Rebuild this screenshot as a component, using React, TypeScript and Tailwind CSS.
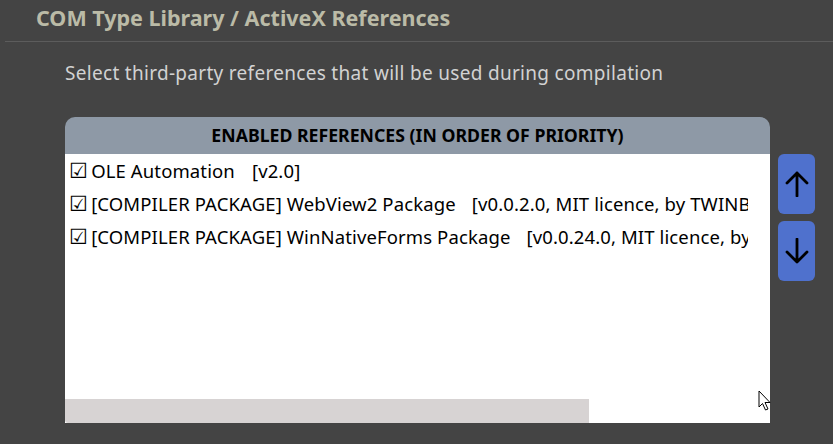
const refs = [
  { name: "OLE Automation", info: "[v2.0]", gap: "ml-[17px]" },
  {
    name: "[COMPILER PACKAGE] WebView2 Package",
    info: "[v0.0.2.0, MIT licence, by TWINBASIC LTD]",
    gap: "ml-[16px]",
  },
  {
    name: "[COMPILER PACKAGE] WinNativeForms Package",
    info: "[v0.0.24.0, MIT licence, by TWINBASIC LTD]",
    gap: "ml-[16px]",
  },
];

function Arrow({ down }: { down?: boolean }) {
  return (
    <svg
      width="24"
      height="26"
      viewBox="0 0 24 26"
      className={down ? "rotate-180" : ""}
    >
      <path
        d="M12 2 V25 M2 12 L12 2 L22 12"
        fill="none"
        stroke="#000"
        strokeWidth="2.8"
        strokeLinecap="round"
        strokeLinejoin="round"
      />
    </svg>
  );
}

function Cursor() {
  return (
    <svg
      className="absolute left-[758px] top-[390px]"
      width="14"
      height="22"
      viewBox="0 0 14 22"
    >
      <path
        d="M1 1 L1 17 L4.5 13.5 L7.5 20 L10 19 L7 12.5 L12 12.5 Z"
        fill="#fff"
        stroke="#000"
        strokeWidth="1"
      />
    </svg>
  );
}

export default function App() {
  return (
    <div
      className="relative w-[833px] h-[444px] overflow-hidden bg-[#444444]"
      style={{ fontFamily: '"Noto Sans", "Open Sans", sans-serif' }}
    >
      <div className="ml-[5px] h-[42px] border-b border-[#5c5c5c] pl-[31px] pt-[3px]">
        <h1 className="text-[21.5px] font-bold leading-[30px] text-[#bbbba7]">
          COM Type Library / ActiveX References
        </h1>
      </div>

      <p className="mt-[18px] pl-[65px] text-[19px] leading-[26px] tracking-[0.3px] text-[#d2d2d2]">
        Select third-party references that will be used during compilation
      </p>

      <div className="mt-[31px] flex gap-[8px] pl-[65px]">
        <div className="flex h-[306px] w-[705px] flex-col">
          <div className="flex h-[37px] items-center justify-center rounded-t-[10px] bg-[#8e99a6]">
            <span className="text-[17.7px] font-bold text-black">
              ENABLED REFERENCES (IN ORDER OF PRIORITY)
            </span>
          </div>
          <div className="flex flex-1 flex-col bg-white">
            <div className="w-[683px] flex-1 overflow-hidden">
              {refs.map((r) => (
                <div
                  key={r.name}
                  className="flex h-[33px] items-center whitespace-nowrap pl-[4px] text-[18.5px] tracking-[0.12px] text-black"
                >
                  <span className="mr-[3px] text-[21px] leading-none">☑</span>
                  <span>{r.name}</span>
                  <span className={r.gap}>{r.info}</span>
                </div>
              ))}
            </div>
            <div className="h-[24px]">
              <div className="h-full w-[524px] rounded-bl-[3px] bg-[#d7d3d3]" />
            </div>
          </div>
        </div>

        <div className="flex flex-col gap-[7px] pt-[37px]">
          <button className="flex h-[60px] w-[37px] items-center justify-center rounded-[6px] bg-[#4f71cd]">
            <Arrow />
          </button>
          <button className="flex h-[60px] w-[37px] items-center justify-center rounded-[6px] bg-[#4f71cd]">
            <Arrow down />
          </button>
        </div>
      </div>

      <Cursor />
    </div>
  );
}
